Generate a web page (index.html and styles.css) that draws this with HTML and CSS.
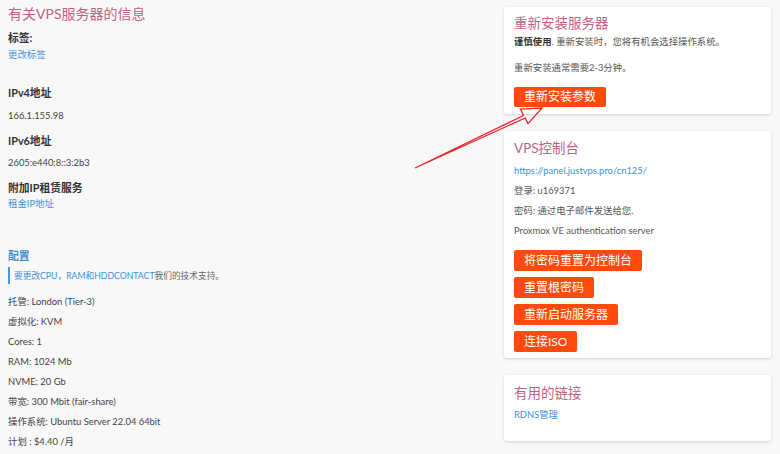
FILE: index.html
```html
<!DOCTYPE html>
<html lang="zh">
<head>
<meta charset="utf-8">
<title>VPS</title>
<link rel="stylesheet" href="styles.css">
</head>
<body>
<div class="page">
  <main class="info">
    <h1 class="page-title">有关VPS服务器的信息</h1>
    <div class="label l-tags">标签:</div>
    <a class="link l-tagslink" href="#">更改标签</a>
    <div class="label l-ipv4">IPv4地址</div>
    <div class="value v-ipv4">166.1.155.98</div>
    <div class="label l-ipv6">IPv6地址</div>
    <div class="value v-ipv6">2605:e440:8::3:2b3</div>
    <div class="label l-extra">附加IP租赁服务</div>
    <a class="link l-rent" href="#">租金IP地址</a>
    <div class="config-title">配置</div>
    <div class="note"><span class="note-blue">要更改CPU，RAM和HDDCONTACT</span>我们的技术支持。</div>
    <ul class="specs">
      <li>托管: London (Tier-3)</li>
      <li>虚拟化: KVM</li>
      <li>Cores: 1</li>
      <li>RAM: 1024 Mb</li>
      <li>NVME: 20 Gb</li>
      <li>带宽: 300 Mbit (fair-share)</li>
      <li>操作系统: Ubuntu Server 22.04 64bit</li>
      <li>计划 : $4.40 /月</li>
    </ul>
  </main>
  <aside class="side">
    <section class="card card-reinstall">
      <h2 class="card-title">重新安装服务器</h2>
      <p class="card-text"><b>谨慎使用</b>. 重新安装时，您将有机会选择操作系统。</p>
      <p class="card-text gap">重新安装通常需要2-3分钟。</p>
      <button class="btn btn-first">重新安装参数</button>
    </section>
    <section class="card card-console">
      <h2 class="card-title">VPS控制台</h2>
      <a class="card-text card-link first-line" href="#">https://panel.justvps.pro/cn125/</a>
      <p class="card-text line">登录: u169371</p>
      <p class="card-text line">密码: 通过电子邮件发送给您.</p>
      <p class="card-text line">Proxmox VE authentication server</p>
      <div class="btn-stack">
        <button class="btn">将密码重置为控制台</button>
        <button class="btn">重置根密码</button>
        <button class="btn">重新启动服务器</button>
        <button class="btn">连接ISO</button>
      </div>
    </section>
    <section class="card card-links">
      <h2 class="card-title">有用的链接</h2>
      <a class="card-text card-link first-line" href="#">RDNS管理</a>
    </section>
  </aside>
</div>
<svg class="arrow" width="130" height="70" viewBox="0 0 130 70">
  <polygon points="1,62 109.5,9.5 106.5,3.2 128,2 114,17.6 111.2,12" fill="none" stroke="#e8262c" stroke-width="1.3" stroke-linejoin="miter"/>
</svg>
</body>
</html>
```
FILE: styles.css
```css
html, body {
  margin: 0;
  padding: 0;
  background: #f8f8f8;
}
body {
  font-family: Lato, "Noto Sans CJK SC", sans-serif;
  color: #444;
  font-size: 9.4px;
  width: 780px;
  height: 454px;
  overflow: hidden;
  position: relative;
}
.page {
  display: flex;
  align-items: flex-start;
  padding: 0 9px 0 8px;
}
.info {
  flex: 1;
  display: flex;
  flex-direction: column;
  align-items: flex-start;
}
.page-title {
  margin: 4px 0 0;
  font-size: 14px;
  line-height: 20px;
  font-weight: normal;
  color: #c45f84;
}
.label {
  font-size: 10.8px;
  font-weight: bold;
  line-height: 16px;
  color: #333;
}
.value {
  line-height: 16px;
  color: #444;
}
.link {
  color: #3d90d9;
  text-decoration: none;
  line-height: 16px;
}
.l-tags { margin-top: 6px; }
.l-tagslink { margin-top: 1px; }
.l-ipv4 { margin-top: 22px; }
.v-ipv4 { margin-top: 7px; }
.l-ipv6 { margin-top: 9px; }
.v-ipv6 { margin-top: 6px; }
.l-extra { margin-top: 9px; }
.l-rent { margin-top: 0; }
.config-title {
  margin-top: 36px;
  font-size: 10.8px;
  font-weight: bold;
  line-height: 16px;
  color: #3d90d9;
}
.note {
  margin-top: 3px;
  border-left: 2px solid #4a96dc;
  padding-left: 4px;
  line-height: 17px;
  font-size: 8.7px;
  color: #666;
}
.note-blue { color: #3d90d9; }
.specs {
  list-style: none;
  margin: 8px 0 0;
  padding: 0;
}
.specs li {
  line-height: 20px;
}
.side {
  width: 267px;
  margin-top: 7px;
  display: flex;
  flex-direction: column;
  gap: 17px;
}
.card {
  background: #fff;
  border-radius: 3px;
  box-shadow: 0 1px 3px rgba(0, 0, 0, 0.16);
  padding: 6px 10px 7px;
  display: flex;
  flex-direction: column;
  align-items: flex-start;
}
.card-title {
  margin: 0;
  font-size: 13.5px;
  line-height: 20px;
  font-weight: normal;
  color: #c45f84;
}
.card-text {
  margin: 0;
  line-height: 14px;
  font-size: 9.4px;
  color: #555;
}
.card-link {
  color: #3d90d9;
  text-decoration: none;
}
.card-text b { color: #333; }
.card-reinstall .card-title + .card-text { margin-top: 2px; }
.gap { margin-top: 12px; }
.btn {
  border: none;
  border-radius: 2px;
  background: #ff4a0b;
  color: #fff;
  font-family: Lato, "Noto Sans CJK SC", sans-serif;
  font-size: 12px;
  line-height: 21px;
  height: 21px;
  padding: 0 10px;
  margin: 0;
}
.btn-first { margin-top: 12px; height: 20px; line-height: 20px; }
.card-console { padding-top: 7px; padding-bottom: 6px; }
.first-line { margin-top: 6px; }
.line { margin-top: 6px; }
.btn-stack {
  margin-top: 12px;
  display: flex;
  flex-direction: column;
  align-items: flex-start;
  gap: 6px;
}
.card-links { padding-top: 8px; padding-bottom: 19px; }
.card-links .first-line { margin-top: 5px; }
.arrow {
  position: absolute;
  left: 414px;
  top: 106px;
}
```
